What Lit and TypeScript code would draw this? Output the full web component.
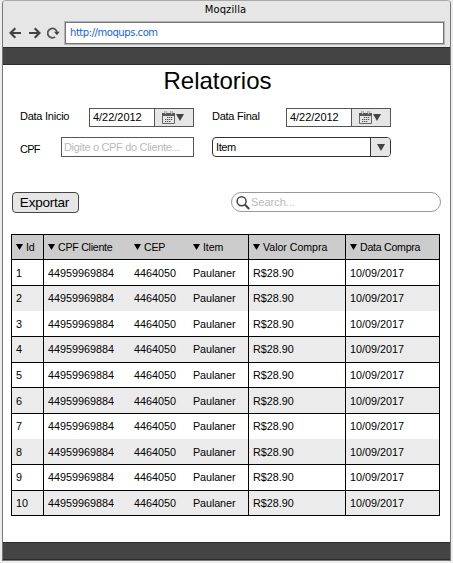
import { LitElement, html, css, svg } from "lit";
import { customElement, property } from "lit/decorators.js";

const calendar = svg`
  <path d="M.5 2.500h12v10H.5z" fill="#e6e6e6" stroke="#666"/>
  <path d="M0 2h13v3H0z" fill="#555"/>
  <path d="M3.500 0v3.500M9.500 0v3.500" stroke="#777" stroke-width="2"/>
  <path d="M3.500 0v3M9.500 0v3" stroke="#ddd" stroke-width=".8"/>
  <path d="M5 6.500h6M3 8.500h8M3 10.500h6" stroke="#555" stroke-width="1.200" stroke-dasharray="1.300 .7"/>`;

@customElement("date-field")
class DateField extends LitElement {
  @property() value = "";
  static styles = css`
    :host { display: flex; box-sizing: border-box; width: 105px; height: 19px; border: 1px solid #555; background: #fff; font-size: 11px; line-height: 17px; }
    .value { flex: 1; padding-left: 3px; letter-spacing: -0.03px; }
    .toggle { box-sizing: border-box; width: 39px; border-left: 1px solid #555; background: #e6e6e6; display: flex; align-items: center; padding-left: 7px; gap: 1px; }
    svg { display: block; flex: none; }
  `;
  render() {
    return html`<div class="value">${this.value}</div>
      <div class="toggle">
        <svg width="13" height="13" viewBox="0 0 13 13">${calendar}</svg>
        <svg width="8" height="7" viewBox="0 0 8 7"><path d="M0 0h8L4 7z" fill="#444" /></svg>
      </div>`;
  }
}

@customElement("app-root")
class AppRoot extends LitElement {
  static styles = css`
    :host { display: block; box-sizing: border-box; width: 453px; height: 563px; padding: 0 2px 2px; overflow: hidden; background: #ededed; font-family: "Liberation Sans", Arial, sans-serif; font-size: 11px; color: #000; }
    * { box-sizing: border-box; }
    svg { display: block; flex: none; }
    .window { width: 449px; height: 561px; display: flex; flex-direction: column; border: 1px solid #777; border-top-color: #aaa; border-radius: 4px 4px 0 0; background: #fff; overflow: hidden; }
    .chrome { height: 46px; flex: none; background: #e6e6e6; }
    .title { height: 20px; padding-right: 2px; text-align: center; font: 10px/18px "DejaVu Sans", sans-serif; letter-spacing: 0.1px; }
    .nav { display: flex; align-items: center; height: 23px; padding-left: 6px; }
    .nav .next { margin-left: 6px; }
    .nav .reload { margin-left: 6px; }
    .url { width: 379px; height: 22px; margin-left: 5px; padding-left: 4px; border: 1px solid #777; outline: 1px solid #b5b5b5; background: #fff; color: #1464dc; font: 10px/20px "DejaVu Sans", sans-serif; letter-spacing: -0.45px; }
    .bar { height: 18px; flex: none; background: #444; border: 1px solid #2c2c2c; border-width: 1px 0; }
    .content { flex: 1; padding-left: 8px; }
    h1 { margin: 0; height: 43px; padding-right: 26px; text-align: center; font-weight: 400; font-size: 24px; line-height: 32px; }
    .fields { display: grid; grid-template-columns: 69px 123px 74px 105px; grid-template-rows: 19px 20px; padding-left: 9px; row-gap: 10px; }
    .label { line-height: 17px; letter-spacing: -0.25px; }
    .low { line-height: 24px; letter-spacing: -0.8px; }
    .cpf { width: 133px; margin-left: -28px; height: 20px; border: 1px solid #555; padding-left: 2px; color: #b9b9b9; line-height: 18px; white-space: nowrap; letter-spacing: -0.32px; }
    .select { grid-column: 3 / 5; width: 179px; height: 20px; display: flex; border: 1px solid #333; border-radius: 4px; overflow: hidden; line-height: 18px; }
    .select .value { flex: 1; padding-left: 3px; letter-spacing: -0.4px; }
    .select .arrow { width: 20px; border-left: 1px solid #333; background: #e6e6e6; display: flex; align-items: center; justify-content: center; }
    .tools { display: flex; margin-top: 35px; }
    .export { width: 67px; height: 21px; margin-left: 1px; border: 1px solid #444; border-radius: 4px; background: #e6e6e6; text-align: center; font-size: 13.5px; line-height: 19px; letter-spacing: -0.22px; padding-right: 2px; }
    .search { width: 210px; height: 20px; margin-left: 152px; border: 1px solid #999; border-radius: 10px; display: flex; padding: 3px 0 0 4px; gap: 1px; color: #b9b9b9; line-height: 13px; }
    .grid { display: grid; grid-template-columns: 32px 86px 59px 60px 97px 95px; width: 429px; margin-top: 21px; border-top: 1px solid #000; }
    .cell { height: var(--h); padding-left: 5px; line-height: 25px; font-size: 10.8px; white-space: nowrap; }
    .ruled { border-bottom: 1px solid #000; }
    .lower { padding-top: 1px; }
    .line { border-left: 1px solid #000; padding-left: 4px; }
    .end { border-right: 1px solid #000; }
    .even { background: #ebebeb; }
    .head { background: #ccc; display: flex; align-items: center; gap: 3px; font-size: 10.6px; letter-spacing: -0.25px; }
    .wide { letter-spacing: -0.02px; }
    .name { letter-spacing: -0.1px; }
  `;

  // Heights of 25 and 26 keep the rules on whole pixels.
  private heights = [26, 25, 26, 26, 25, 26, 25, 26, 26, 25];
  private headers = ["Id", "CPF Cliente", "CEP", "Item", "Valor Compra", "Data Compra"];

  private rule(i: number) {
    return (i === 0 || i === 1 || i > 3 ? "line " : "") + (i === 5 ? "end " : "") + (i === 3 ? "name " : "");
  }

  render() {
    return html`<div class="window">
      <div class="chrome">
        <div class="title">Moqzilla</div>
        <div class="nav">
          <svg width="13" height="12" viewBox="0 0 13 12"><path d="M12 6H1.800M6.300 1.200L1.500 6l4.800 4.800" fill="none" stroke="#444" stroke-width="2.200" /></svg>
          <svg class="next" width="13" height="12" viewBox="0 0 13 12"><path d="M1 6h10.200M6.700 1.200L11.500 6l-4.800 4.800" fill="none" stroke="#444" stroke-width="2.200" /></svg>
          <svg class="reload" width="13" height="12" viewBox="0 0 13 12"><path d="M8.200 9.900A4.700 4.700 0 1 1 10.100 6" fill="none" stroke="#555" stroke-width="1.800" /><path d="M7 4.800h5.700L9.900 8.300z" fill="#444" /></svg>
          <div class="url">http://moqups.com</div>
        </div>
      </div>
      <div class="bar"></div>
      <div class="content">
        <h1>Relatorios</h1>
        <div class="fields">
          <div class="label">Data Inicio</div>
          <date-field value="4/22/2012"></date-field>
          <div class="label">Data Final</div>
          <date-field value="4/22/2012"></date-field>
          <div class="label low">CPF</div>
          <div class="cpf">Digite o CPF do Cliente...</div>
          <div class="select">
            <div class="value">Item</div>
            <div class="arrow"><svg width="8" height="7" viewBox="0 0 8 7"><path d="M0 0h8L4 7z" fill="#444" /></svg></div>
          </div>
        </div>
        <div class="tools">
          <div class="export">Exportar</div>
          <div class="search">
            <svg width="14" height="14" viewBox="0 0 14 14"><circle cx="5.600" cy="5.300" r="4.500" fill="none" stroke="#444" stroke-width="1.500" /><path d="M8.800 8.500l4.400 4.500" stroke="#444" stroke-width="2" /></svg>
            Search...
          </div>
        </div>
        <div class="grid" style="--h:25px">
          ${this.headers.map((t, i) => html`<div class="cell head ruled ${this.rule(i)} ${i === 4 ? "wide" : ""}">
            <svg width="7" height="6" viewBox="0 0 7 6"><path d="M0 0h7L3.500 6z" /></svg><span>${t}</span>
          </div>`)}
          ${this.heights.map((h, r) =>
            [String(r + 1), "44959969884", "4464050", "Paulaner", "R$28.90", "10/09/2017"].map(
              (t, i) => html`<div class="cell ${this.rule(i)} ${r % 2 ? "even" : ""} ${r === 1 || r === 6 ? "" : "ruled"} ${[0, 2, 5, 7].includes(r) ? "lower" : ""}" style="--h:${h}px">${t}</div>`
            )
          )}
        </div>
      </div>
      <div class="bar"></div>
    </div>`;
  }
}
